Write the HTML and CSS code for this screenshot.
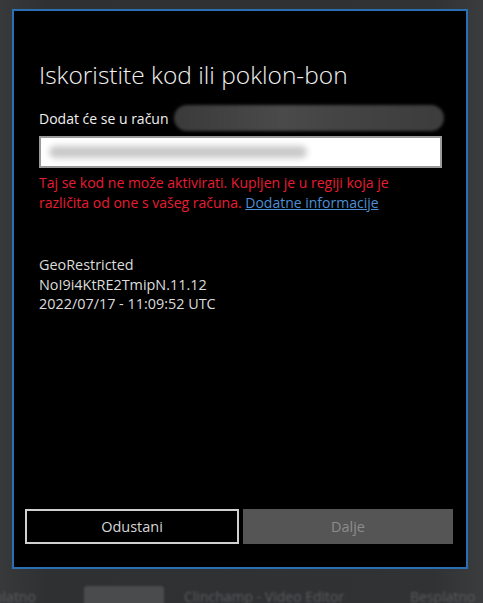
FILE: index.html
```html
<!DOCTYPE html>
<html lang="hr">
<head>
<meta charset="utf-8">
<title>Iskoristite kod ili poklon-bon</title>
<link rel="stylesheet" href="styles.css">
</head>
<body>
<div class="screen">
  <div class="dialog">
    <div class="content">
      <h1 class="title">Iskoristite kod ili poklon-bon</h1>
      <div class="account-row">
        <span class="account-label">Dodat će se u račun</span>
        <span class="account-blur"></span>
      </div>
      <div class="code-input">
        <span class="code-blur"></span>
      </div>
      <p class="error">Taj se kod ne može aktivirati. Kupljen je u regiji koja je različita od one s vašeg računa. <a class="link" href="#">Dodatne informacije</a></p>
      <div class="info">
        <div>GeoRestricted</div>
        <div>NoI9i4KtRE2TmipN.11.12</div>
        <div>2022/07/17 - 11:09:52 UTC</div>
      </div>
    </div>
    <div class="actions">
      <button class="btn btn-cancel">Odustani</button>
      <button class="btn btn-next">Dalje</button>
    </div>
  </div>
  <div class="store-row">
    <span class="store-left">platno</span>
    <span class="store-thumb"></span>
    <span class="store-name">Clinchamp - Video Editor</span>
    <span class="store-price">Besplatno</span>
  </div>
</div>
</body>
</html>
```
FILE: styles.css
```css
html, body {
  margin: 0;
  padding: 0;
  background: #303133;
}
body {
  font-family: "Open Sans", "Noto Sans", sans-serif;
  width: 483px;
  height: 603px;
  overflow: hidden;
}
.screen {
  width: 483px;
  height: 603px;
  background: linear-gradient(90deg, #38393b 0%, #2e3032 10%, #303234 90%, #3a3c3e 100%);
  padding-top: 9px;
  box-sizing: border-box;
  overflow: hidden;
}
.dialog {
  margin-left: 12px;
  width: 456px;
  height: 560px;
  box-sizing: border-box;
  border: 2px solid #2a6fb3;
  background: #000;
  display: flex;
  flex-direction: column;
}
.content {
  flex: 1;
  padding: 48px 24px 0 25px;
}
.title {
  margin: 0;
  font-weight: 300;
  font-size: 24.5px;
  line-height: 32px;
  color: #f2f2f2;
}
.account-row {
  display: flex;
  align-items: center;
  margin-top: 14px;
  height: 26px;
}
.account-label {
  font-size: 14px;
  color: #f0f0f0;
  white-space: nowrap;
}
.account-blur {
  margin-left: 5px;
  flex: 1;
  height: 26px;
  border-radius: 13px;
  background: linear-gradient(90deg, #3a3a3a, #4a4a4a 40%, #444 60%, #3c3c3c);
  filter: blur(1.5px);
  margin-right: -2px;
}
.code-input {
  margin-top: 5px;
  height: 32px;
  box-sizing: border-box;
  border: 2px solid #9a9a9a;
  background: #fff;
  display: flex;
  align-items: center;
  padding-left: 8px;
}
.code-blur {
  width: 258px;
  height: 12px;
  background: #c8c8c8;
  border-radius: 6px;
  filter: blur(3px);
}
.error {
  margin: 5px 0 0;
  font-size: 14px;
  line-height: 20px;
  color: #e81c33;
  max-width: 362px;
}
.link {
  color: #4d8fd6;
  text-decoration: underline;
  line-height: 18px;
}
.info {
  margin-top: 42px;
  font-size: 14.4px;
  line-height: 19.5px;
  color: #dcdcdc;
}
.actions {
  display: flex;
  gap: 4px;
  padding: 0 13px 23px 11px;
}
.btn {
  flex: 1;
  height: 35px;
  font-family: inherit;
  font-size: 14.5px;
  font-weight: 400;
  box-sizing: border-box;
  padding: 0;
}
.btn-cancel {
  background: #000;
  color: #d6d6d6;
  border: 2px solid #d0d0d0;
}
.btn-next {
  background: #555;
  color: #8c8c8c;
  border: none;
}
.store-row {
  display: flex;
  align-items: flex-start;
  height: 34px;
  padding-top: 18px;
  box-sizing: border-box;
  color: #5a5b5c;
  font-size: 14px;
  filter: blur(0.8px);
}
.store-left {
  margin-left: -6px;
  width: 90px;
}
.store-thumb {
  width: 80px;
  height: 30px;
  background: #4a4b4d;
  border-radius: 3px;
  margin-top: -1px;
}
.store-name {
  margin-left: 20px;
  width: 226px;
}
.store-price {
  margin-left: 0;
}
```
